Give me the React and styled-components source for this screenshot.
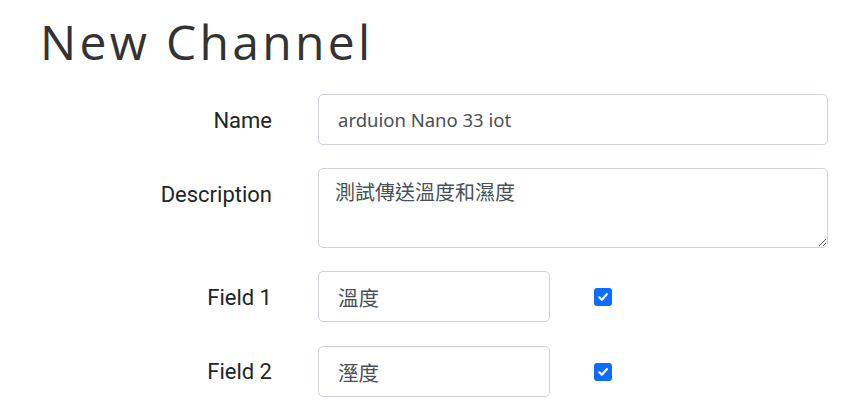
import styled, { createGlobalStyle } from 'styled-components';

const GlobalStyle = createGlobalStyle`
    html, body {
        margin: 0;
        padding: 0;
        background: #fff;
    }
    body {
        font-family: "Noto Sans", "Noto Sans CJK TC", sans-serif;
        color: #212529;
    }
`;

const Page = styled.div`
    width: 867px;
    height: 404px;
    overflow: hidden;
    box-sizing: border-box;
    padding: 10px 39px 0 0;
`;

const Title = styled.h1`
    margin: 0 0 21px 40px;
    font-family: "Open Sans", sans-serif;
    font-weight: 400;
    font-size: 48px;
    letter-spacing: 3.3px;
    line-height: 63px;
    color: #333;
`;

const Form = styled.form`
    display: grid;
    grid-template-columns: 272px 1fr;
    column-gap: 46px;
    row-gap: 23px;
`;

const Label = styled.label`
    text-align: right;
    font-family: "Roboto", "Noto Sans", sans-serif;
    font-size: 22px;
    line-height: 28px;
    color: #212529;
    align-self: ${(p) => (p.$top ? 'start' : 'center')};
    padding-top: ${(p) => (p.$top ? '13px' : '2px')};
`;

const Input = styled.input`
    box-sizing: border-box;
    width: ${(p) => p.$width || '100%'};
    height: 51px;
    padding: 0 19px;
    border: 1px solid #ced4da;
    border-radius: 5px;
    font-family: "Noto Sans", "Noto Sans CJK TC", sans-serif;
    font-size: ${(p) => p.$size || '18.5px'};
    color: #495057;
    background: #fff;
    outline: none;
`;

const TextArea = styled.textarea`
    box-sizing: border-box;
    width: 100%;
    height: 80px;
    padding: 9px 16px;
    border: 1px solid #ced4da;
    border-radius: 5px;
    font-family: "Noto Sans CJK TC", sans-serif;
    font-size: 20px;
    line-height: 28px;
    color: #495057;
    resize: vertical;
    outline: none;
    display: block;
`;

const FieldRow = styled.div`
    display: flex;
    align-items: center;
    gap: 44px;
    margin-top: ${(p) => (p.$last ? '1px' : '0')};
`;

const Check = styled.span`
    width: 18px;
    height: 18px;
    border-radius: 3px;
    background: #0d6efd;
    display: inline-flex;
    align-items: center;
    justify-content: center;
`;

const CheckMark = () => (
    <svg width="12" height="12" viewBox="0 0 12 12">
        <path d="M2.3 6.2 L4.9 8.8 L9.8 3.2" fill="none" stroke="#fff" strokeWidth="2.2" strokeLinecap="round" strokeLinejoin="round" />
    </svg>
);

const fields = [
    { label: 'Field 1', value: '溫度' },
    { label: 'Field 2', value: '溼度' },
];

export default function App() {
    return (
        <Page>
            <GlobalStyle />
            <Title>New Channel</Title>
            <Form>
                <Label>Name</Label>
                <Input defaultValue="arduion Nano 33 iot" />
                <Label $top>Description</Label>
                <TextArea defaultValue="測試傳送溫度和濕度" />
                {fields.map((f, i) => (
                    <>
                        <Label key={f.label + 'l'}>{f.label}</Label>
                        <FieldRow key={f.label + 'r'} $last={i === fields.length - 1}>
                            <Input $width="232px" $size="20.5px" defaultValue={f.value} />
                            <Check>
                                <CheckMark />
                            </Check>
                        </FieldRow>
                    </>
                ))}
            </Form>
        </Page>
    );
}
